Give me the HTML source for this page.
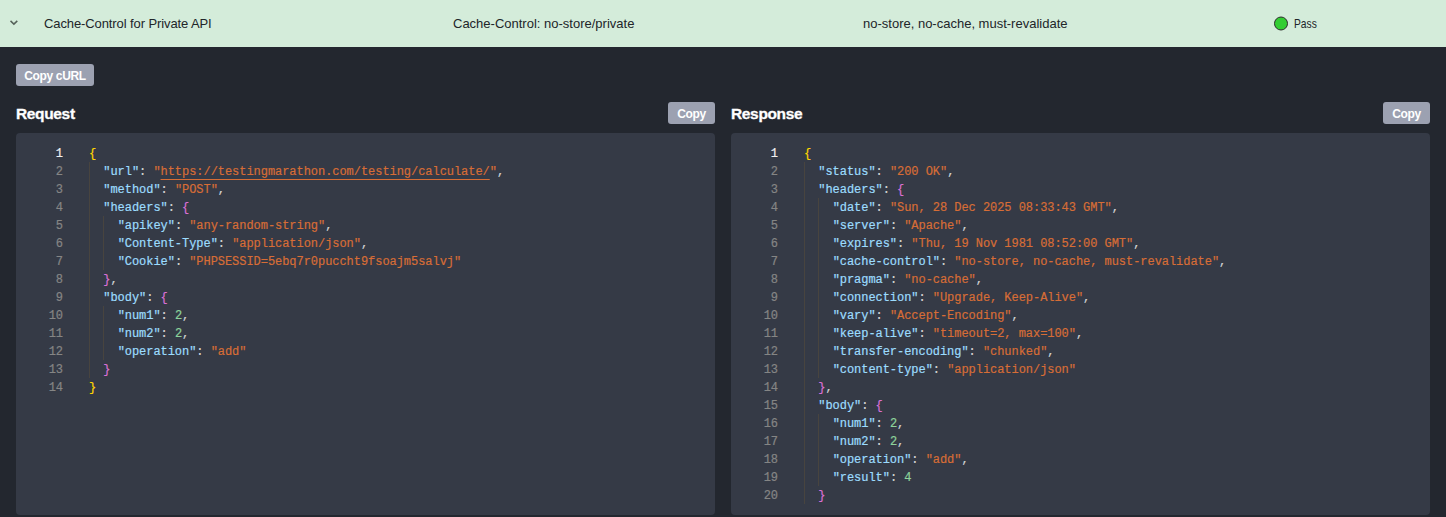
<!DOCTYPE html>
<html><head><meta charset="utf-8">
<style>
*{box-sizing:border-box;margin:0;padding:0}
html,body{width:1446px;height:517px;overflow:hidden;background:#23272f}
body{font-family:"Liberation Sans",sans-serif;position:relative}
.hdr{position:absolute;left:0;top:0;width:1446px;height:47px;background:#d4ecda;color:#212529;font-size:13px}
.hdr .t{position:absolute;top:16px;line-height:15px;white-space:nowrap}
.chev{position:absolute;left:10px;top:19px}
.dot{position:absolute;left:1274px;top:16px;transform:translateY(0.5px);width:14px;height:14px;border-radius:50%;background:#32cd32;border:1px solid #2b2b2b}
.btn{position:absolute;height:22px;background:#9ca1b1;color:#fff;font-weight:bold;font-size:12px;line-height:23px;padding-top:1px;letter-spacing:-0.35px;text-align:center;border-radius:3px}
.title{position:absolute;top:105px;color:#fff;font-weight:bold;font-size:15.5px;letter-spacing:-0.35px;line-height:18px;-webkit-text-stroke:0.3px #fff}
.panel{position:absolute;top:133px;width:699px;height:382px;background:#353a46;border-radius:4px;overflow:hidden}
.code{position:absolute;left:0;top:12px;font-family:"Liberation Mono",monospace;font-size:12px;letter-spacing:-0.045px;line-height:18px;white-space:pre;-webkit-text-stroke:0.2px}
.ln{position:absolute;left:0;width:47px;text-align:right;color:#858585}
.ln.a{color:#f0f0f0}
.tx{position:absolute;left:73px;color:#d4d4d4}
.k{color:#9cdcfe}.s{color:#d76d36}.n{color:#8dd39b}
.b1{color:#ffd700}.b2{color:#da70d6}
.u{text-decoration:underline;text-underline-offset:4px}
.g{position:absolute;width:1px;background:#48443f}
</style></head><body>
<div class="hdr">
  <svg class="chev" width="10" height="8" viewBox="0 0 10 8"><path d="M0.5 1.9 L3.9 5.1 L7.3 1.9" fill="none" stroke="#56625a" stroke-width="1.5"/></svg>
  <div class="t" style="left:44px;letter-spacing:-0.1px">Cache-Control for Private API</div>
  <div class="t" style="left:453px">Cache-Control: no-store/private</div>
  <div class="t" style="left:863px">no-store, no-cache, must-revalidate</div>
  <div class="dot"></div>
  <div class="t" style="left:1294px;transform:scaleX(0.79);transform-origin:0 0">Pass</div>
</div>
<div class="btn" style="left:16px;top:64px;width:78px">Copy cURL</div>
<div class="title" style="left:16px">Request</div>
<div class="btn" style="left:668px;top:102px;width:47px">Copy</div>
<div class="title" style="left:731px">Response</div>
<div class="btn" style="left:1383px;top:102px;width:47px">Copy</div>

<div class="panel" style="left:16px">
 <div class="code">
  <div class="g" style="left:73px;top:17px;height:216px"></div>
  <div class="g" style="left:87px;top:71px;height:54px"></div>
  <div class="g" style="left:87px;top:161px;height:54px"></div>
  <div class="ln a" style="top:0">1</div>
  <div class="ln" style="top:18px">2</div>
  <div class="ln" style="top:36px">3</div>
  <div class="ln" style="top:54px">4</div>
  <div class="ln" style="top:72px">5</div>
  <div class="ln" style="top:90px">6</div>
  <div class="ln" style="top:108px">7</div>
  <div class="ln" style="top:126px">8</div>
  <div class="ln" style="top:144px">9</div>
  <div class="ln" style="top:162px">10</div>
  <div class="ln" style="top:180px">11</div>
  <div class="ln" style="top:198px">12</div>
  <div class="ln" style="top:216px">13</div>
  <div class="ln" style="top:234px">14</div>
  <div class="tx" style="top:0"><span class="b1">{</span></div>
  <div class="tx" style="top:18px">  <span class="k">"url"</span>: <span class="s">"<span class="u">https://testingmarathon.com/testing/calculate/</span>"</span>,</div>
  <div class="tx" style="top:36px">  <span class="k">"method"</span>: <span class="s">"POST"</span>,</div>
  <div class="tx" style="top:54px">  <span class="k">"headers"</span>: <span class="b2">{</span></div>
  <div class="tx" style="top:72px">    <span class="k">"apikey"</span>: <span class="s">"any-random-string"</span>,</div>
  <div class="tx" style="top:90px">    <span class="k">"Content-Type"</span>: <span class="s">"application/json"</span>,</div>
  <div class="tx" style="top:108px">    <span class="k">"Cookie"</span>: <span class="s">"PHPSESSID=5ebq7r0puccht9fsoajm5salvj"</span></div>
  <div class="tx" style="top:126px">  <span class="b2">}</span>,</div>
  <div class="tx" style="top:144px">  <span class="k">"body"</span>: <span class="b2">{</span></div>
  <div class="tx" style="top:162px">    <span class="k">"num1"</span>: <span class="n">2</span>,</div>
  <div class="tx" style="top:180px">    <span class="k">"num2"</span>: <span class="n">2</span>,</div>
  <div class="tx" style="top:198px">    <span class="k">"operation"</span>: <span class="s">"add"</span></div>
  <div class="tx" style="top:216px">  <span class="b2">}</span></div>
  <div class="tx" style="top:234px"><span class="b1">}</span></div>
 </div>
</div>

<div class="panel" style="left:731px">
 <div class="code">
  <div class="g" style="left:73px;top:17px;height:342px"></div>
  <div class="g" style="left:87px;top:53px;height:180px"></div>
  <div class="g" style="left:87px;top:269px;height:72px"></div>
  <div class="ln a" style="top:0">1</div>
  <div class="ln" style="top:18px">2</div>
  <div class="ln" style="top:36px">3</div>
  <div class="ln" style="top:54px">4</div>
  <div class="ln" style="top:72px">5</div>
  <div class="ln" style="top:90px">6</div>
  <div class="ln" style="top:108px">7</div>
  <div class="ln" style="top:126px">8</div>
  <div class="ln" style="top:144px">9</div>
  <div class="ln" style="top:162px">10</div>
  <div class="ln" style="top:180px">11</div>
  <div class="ln" style="top:198px">12</div>
  <div class="ln" style="top:216px">13</div>
  <div class="ln" style="top:234px">14</div>
  <div class="ln" style="top:252px">15</div>
  <div class="ln" style="top:270px">16</div>
  <div class="ln" style="top:288px">17</div>
  <div class="ln" style="top:306px">18</div>
  <div class="ln" style="top:324px">19</div>
  <div class="ln" style="top:342px">20</div>
  <div class="tx" style="top:0"><span class="b1">{</span></div>
  <div class="tx" style="top:18px">  <span class="k">"status"</span>: <span class="s">"200 OK"</span>,</div>
  <div class="tx" style="top:36px">  <span class="k">"headers"</span>: <span class="b2">{</span></div>
  <div class="tx" style="top:54px">    <span class="k">"date"</span>: <span class="s">"Sun, 28 Dec 2025 08:33:43 GMT"</span>,</div>
  <div class="tx" style="top:72px">    <span class="k">"server"</span>: <span class="s">"Apache"</span>,</div>
  <div class="tx" style="top:90px">    <span class="k">"expires"</span>: <span class="s">"Thu, 19 Nov 1981 08:52:00 GMT"</span>,</div>
  <div class="tx" style="top:108px">    <span class="k">"cache-control"</span>: <span class="s">"no-store, no-cache, must-revalidate"</span>,</div>
  <div class="tx" style="top:126px">    <span class="k">"pragma"</span>: <span class="s">"no-cache"</span>,</div>
  <div class="tx" style="top:144px">    <span class="k">"connection"</span>: <span class="s">"Upgrade, Keep-Alive"</span>,</div>
  <div class="tx" style="top:162px">    <span class="k">"vary"</span>: <span class="s">"Accept-Encoding"</span>,</div>
  <div class="tx" style="top:180px">    <span class="k">"keep-alive"</span>: <span class="s">"timeout=2, max=100"</span>,</div>
  <div class="tx" style="top:198px">    <span class="k">"transfer-encoding"</span>: <span class="s">"chunked"</span>,</div>
  <div class="tx" style="top:216px">    <span class="k">"content-type"</span>: <span class="s">"application/json"</span></div>
  <div class="tx" style="top:234px">  <span class="b2">}</span>,</div>
  <div class="tx" style="top:252px">  <span class="k">"body"</span>: <span class="b2">{</span></div>
  <div class="tx" style="top:270px">    <span class="k">"num1"</span>: <span class="n">2</span>,</div>
  <div class="tx" style="top:288px">    <span class="k">"num2"</span>: <span class="n">2</span>,</div>
  <div class="tx" style="top:306px">    <span class="k">"operation"</span>: <span class="s">"add"</span>,</div>
  <div class="tx" style="top:324px">    <span class="k">"result"</span>: <span class="n">4</span></div>
  <div class="tx" style="top:342px">  <span class="b2">}</span></div>
 </div>
</div>
</body></html>
